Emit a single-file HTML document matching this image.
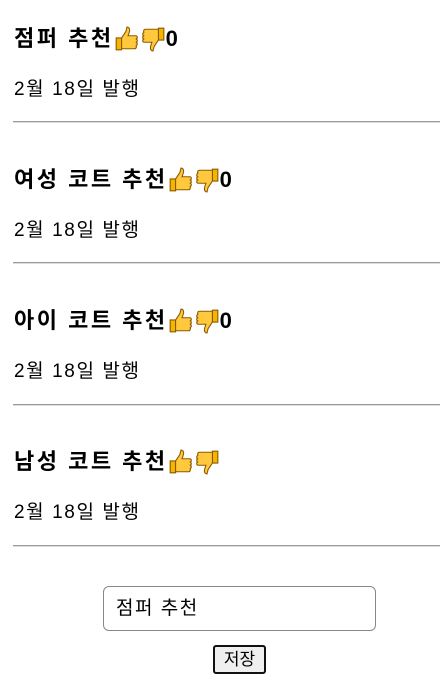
<!DOCTYPE html>
<html><head><meta charset="utf-8"><style>
body{margin:0;width:440px;height:684px;position:relative;font-family:"Liberation Sans","Noto Sans CJK KR",sans-serif;background:#fff;color:#000;overflow:hidden}
.t{position:absolute;left:14px;font-size:22px;font-weight:bold;line-height:26px;white-space:nowrap;display:flex;align-items:center}
.t span{letter-spacing:2.5px}
.d{position:absolute;left:14px;font-size:19px;letter-spacing:1.6px;line-height:24px;white-space:nowrap}
.hr{position:absolute;left:13px;right:0;height:0;border-top:1px solid #999;border-bottom:1px solid #ddd}
svg{display:inline-block;vertical-align:middle}
.in{position:absolute;left:103px;top:586px;border:1px solid #888;border-radius:6px;font-size:19px;letter-spacing:1.5px;line-height:43px;padding-left:12px;box-sizing:border-box;width:273px;height:45px}
.bt{position:absolute;left:213px;top:645px;width:53px;height:29px;border:2px solid #111;border-radius:3px;background:#efefef;box-sizing:border-box;font-size:17px;text-align:center;line-height:25px}
</style></head><body>
<svg width="0" height="0" style="position:absolute"><defs>
<g id="up"><path d="M2 11h5v11H2z" fill="#f4b400" stroke="#8a5a00" stroke-width="1"/><path d="M7 11l4-6 1-4c2 0 3 2 2 5l-1 3h7c2 0 2 3 0 3c2 0 2 3 0 3c2 0 2 3 0 3c1 0 1 3-1 3H7z" fill="#ffc83d" stroke="#8a5a00" stroke-width="1"/></g>
<g id="dn" transform="rotate(180 12 12)"><use href="#up"/></g>
</defs></svg>
<div class="t" style="top:26px"><span>점퍼 추천</span><svg width="26" height="26" viewBox="0 0 24 24"><use href="#up"/></svg><svg width="26" height="26" viewBox="0 0 24 24"><use href="#dn"/></svg>0</div>
<div class="d" style="top:78px">2월 18일 발행</div>
<div class="hr" style="top:121px"></div>
<div class="t" style="top:167px"><span>여성 코트 추천</span><svg width="26" height="26" viewBox="0 0 24 24"><use href="#up"/></svg><svg width="26" height="26" viewBox="0 0 24 24"><use href="#dn"/></svg>0</div>
<div class="d" style="top:219px">2월 18일 발행</div>
<div class="hr" style="top:262px"></div>
<div class="t" style="top:308px"><span>아이 코트 추천</span><svg width="26" height="26" viewBox="0 0 24 24"><use href="#up"/></svg><svg width="26" height="26" viewBox="0 0 24 24"><use href="#dn"/></svg>0</div>
<div class="d" style="top:360px">2월 18일 발행</div>
<div class="hr" style="top:404px"></div>
<div class="t" style="top:449px"><span>남성 코트 추천</span><svg width="26" height="26" viewBox="0 0 24 24"><use href="#up"/></svg><svg width="26" height="26" viewBox="0 0 24 24"><use href="#dn"/></svg></div>
<div class="d" style="top:501px">2월 18일 발행</div>
<div class="hr" style="top:545px"></div>
<div class="in">점퍼 추천</div>
<div class="bt">저장</div>
</body></html>
